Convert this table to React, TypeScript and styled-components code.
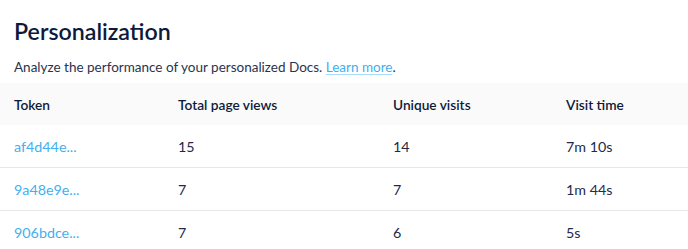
import React from "react";
import styled, { createGlobalStyle } from "styled-components";

const Global = createGlobalStyle`
  html, body { margin: 0; padding: 0; background: #ffffff; }
  body { font-family: "Lato", "Liberation Sans", sans-serif; color: #1b2a4a; }
`;

const Page = styled.div`
  display: flex;
  flex-direction: column;
  padding-top: 17px;
`;

const Title = styled.h1`
  margin: 0 0 0 14px;
  font-size: 23.2px;
  line-height: 28px;
  font-weight: 600;
  color: #0e1a3b;
`;

const Subtitle = styled.p`
  margin: 13px 0 0 14px;
  font-size: 13.5px;
  line-height: 18px;
  color: #28344f;
`;

const Link = styled.a`
  color: #3db0f2;
  text-decoration: underline;
  text-decoration-color: #a9dcfa;
  text-underline-offset: 2px;
`;

const Table = styled.div`
  display: flex;
  flex-direction: column;
  margin-top: 7px;
`;

const Row = styled.div<{ $head?: boolean; $last?: boolean }>`
  display: grid;
  grid-template-columns: 164px 215px 173px 1fr;
  align-items: center;
  height: 42px;
  padding-left: 14px;
  background: ${(p) => (p.$head ? "#fafafa" : "#ffffff")};
  border-bottom: ${(p) => (p.$head || p.$last ? "none" : "1px solid #e6e7ea")};
`;

const HeadCell = styled.div`
  font-size: 13.7px;
  font-weight: 600;
  color: #0e1a3b;
`;

const Cell = styled.div`
  font-size: 14.3px;
  color: #1e2b4a;
`;

const TokenCell = styled(Cell)`
  color: #42b0ee;
`;

const rows = [
  { token: "af4d44e...", views: "15", unique: "14", time: "7m 10s" },
  { token: "9a48e9e...", views: "7", unique: "7", time: "1m 44s" },
  { token: "906bdce...", views: "7", unique: "6", time: "5s" },
];

export default function App() {
  return (
    <>
      <Global />
      <Page>
        <Title>Personalization</Title>
        <Subtitle>
          Analyze the performance of your personalized Docs. <Link href="#">Learn more</Link>.
        </Subtitle>
        <Table>
          <Row $head>
            <HeadCell>Token</HeadCell>
            <HeadCell>Total page views</HeadCell>
            <HeadCell>Unique visits</HeadCell>
            <HeadCell>Visit time</HeadCell>
          </Row>
          {rows.map((r, i) => (
            <Row key={r.token} $last={i === rows.length - 1}>
              <TokenCell>{r.token}</TokenCell>
              <Cell>{r.views}</Cell>
              <Cell>{r.unique}</Cell>
              <Cell>{r.time}</Cell>
            </Row>
          ))}
        </Table>
      </Page>
    </>
  );
}
